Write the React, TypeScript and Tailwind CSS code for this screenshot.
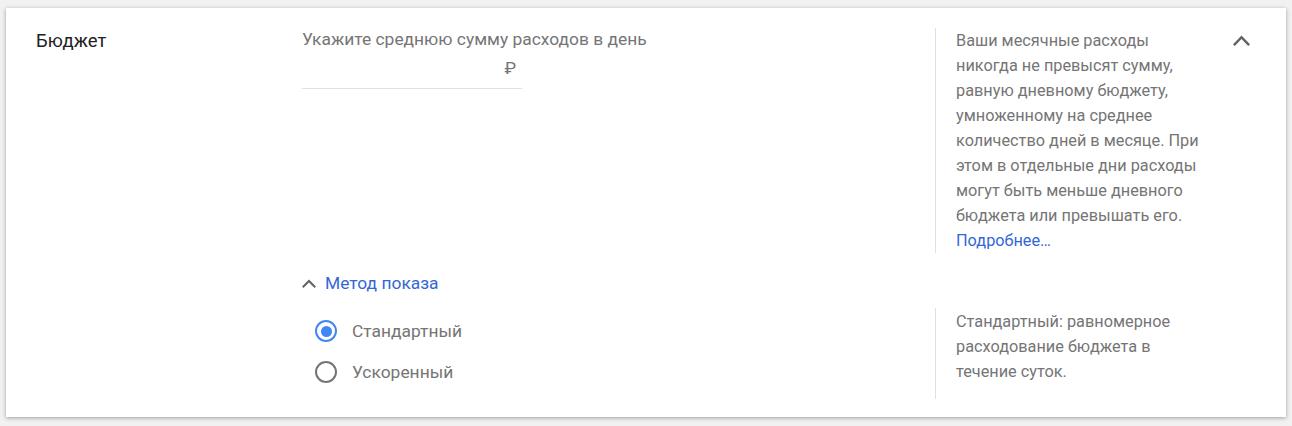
import React from "react";

function ChevronUp({ className, w, h, sw }: { className?: string; w: number; h: number; sw: number }) {
  return (
    <svg width={w} height={h} viewBox={`0 0 ${w} ${h}`} className={className} fill="none">
      <path
        d={`M${sw / 2 + 0.5} ${h - sw / 2 - 0.5} L${w / 2} ${sw / 2 + 1} L${w - sw / 2 - 0.5} ${h - sw / 2 - 0.5}`}
        stroke="currentColor"
        strokeWidth={sw}
        strokeLinecap="square"
        strokeLinejoin="miter"
      />
    </svg>
  );
}

function Radio({ checked, label }: { checked: boolean; label: string }) {
  return (
    <div className="flex items-center h-[22px]">
      <div className="pl-[13px] pr-[15px] flex items-center">
        <div
          className={
            checked
              ? "w-[22px] h-[22px] rounded-full border-[2.5px] border-[#4285f4] flex items-center justify-center"
              : "w-[22px] h-[22px] rounded-full border-[2.5px] border-[#757575]"
          }
        >
          {checked && <div className="w-[11px] h-[11px] rounded-full bg-[#4285f4]" />}
        </div>
      </div>
      <span className="text-[17.4px] leading-6 text-[#757575]">{label}</span>
    </div>
  );
}

export default function App() {
  return (
    <div
      className="bg-[#f1f1f1] pt-[8px] pl-[6px] pr-[6px] pb-[9px] w-[1292px] h-[426px]"
      style={{ fontFamily: "Roboto, 'Noto Sans', sans-serif" }}
    >
      <div className="bg-white shadow-[0_1px_4px_0_rgba(0,0,0,0.35)] pt-5 pb-[19px] pl-[30px] pr-[33px] h-[409px]">
        <div className="grid grid-cols-[266px_633px_267px_1fr]">
          <div className="text-[18.5px] leading-6 text-[#202124] pt-px">Бюджет</div>
          <div>
            <div className="text-[17.4px] leading-6 text-[#757575] -mt-px">
              Укажите среднюю сумму расходов в день
            </div>
            <div className="w-[220px] h-[38px] pt-[5px] pr-[6px] text-right text-[17.4px] leading-6 text-[#757575] border-b border-[#e0e0e0]">
              ₽
            </div>
          </div>
          <div className="border-l border-[#e0e0e0] pl-5">
            <p className="w-[246px] text-[16.3px] leading-[25px] text-[#757575]">
              Ваши месячные расходы никогда не превысят сумму, равную дневному бюджету, умноженному на
              среднее количество дней в месяце. При этом в отдельные дни расходы могут быть меньше
              дневного бюджета или превышать его.
            </p>
            <a className="block text-[16.3px] leading-[25px] text-[#3367d6]">Подробнее…</a>
          </div>
          <div className="flex justify-end">
            <div className="w-6 h-6 flex items-center justify-center text-[#5f6368]">
              <ChevronUp w={17} h={11} sw={2.5} />
            </div>
          </div>
        </div>

        <div className="grid grid-cols-[266px_633px_267px_1fr] mt-[18px]">
          <div />
          <div className="flex items-center h-6 text-[#3367d6]">
            <ChevronUp w={14} h={9} sw={2} className="text-[#5f6368]" />
            <span className="ml-[9px] text-[17.4px] leading-6">Метод показа</span>
          </div>
          <div />
          <div />
        </div>

        <div className="grid grid-cols-[266px_633px_267px_1fr] mt-[13px]">
          <div />
          <div className="pt-[12px] flex flex-col gap-[19px]">
            <Radio checked label="Стандартный" />
            <Radio checked={false} label="Ускоренный" />
          </div>
          <div className="border-l border-[#e0e0e0] pl-5 pb-[15px]">
            <p className="w-[246px] text-[16.3px] leading-[25px] text-[#757575] pt-px">
              Стандартный: равномерное расходование бюджета в течение суток.
            </p>
          </div>
          <div />
        </div>
      </div>
    </div>
  );
}
